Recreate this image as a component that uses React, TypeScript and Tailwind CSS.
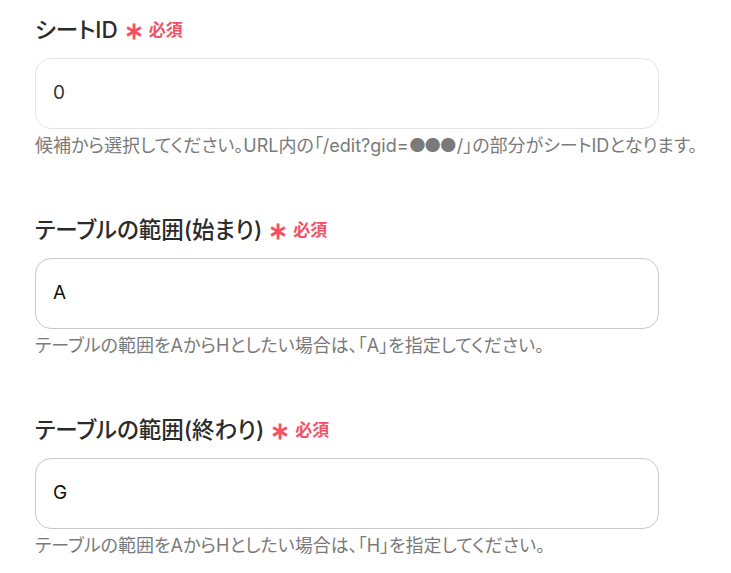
import React from "react";

function Field({ label, value, help, light }: { label: string; value: React.ReactNode; help: React.ReactNode; light?: boolean }) {
  return (
    <div className="flex flex-col">
      <div className="flex items-center h-[40px] pt-[1px]">
        <span className="text-[22.5px] font-medium text-[#2b2b2b] leading-none">{label}</span>
        <span className="ml-[6px] text-[24px] font-bold text-[#f25268] leading-none">∗</span>
        <span className="ml-[5px] text-[17px] font-bold text-[#f25268] leading-none">必須</span>
      </div>
      <div
        className={
          "mt-[8px] w-[624px] h-[71px] rounded-[16px] border bg-white flex items-center px-[17px] text-[19px] " +
          (light ? "border-[#e3e4e8] text-[#333]" : "border-[#c9c9cc] text-[#111]")
        }
      >
        {value}
      </div>
      <div className="mt-[6px] text-[18px] text-[#7a7a7a] leading-[22px] whitespace-nowrap">{help}</div>
    </div>
  );
}

export default function App() {
  return (
    <div
      className="w-[731px] h-[573px] bg-white overflow-hidden pl-[35px] pt-[10px] flex flex-col gap-[53px]"
      style={{ fontFamily: 'Inter, "Noto Sans CJK JP", sans-serif', fontFeatureSettings: '"palt"' }}
    >
      <Field
        label="シートID"
        value="0"
        light
        help={
          <>
            候補から選択してください。URL内の「/edit?gid=<span className="text-[19px] tracking-[-2px] mr-[2px]">●●●</span>/」の部分がシートIDとなります。
          </>
        }
      />
      <Field label="テーブルの範囲(始まり)" value="A" help="テーブルの範囲をAからHとしたい場合は、「A」を指定してください。" />
      <Field label="テーブルの範囲(終わり)" value="G" help="テーブルの範囲をAからHとしたい場合は、「H」を指定してください。" />
    </div>
  );
}
